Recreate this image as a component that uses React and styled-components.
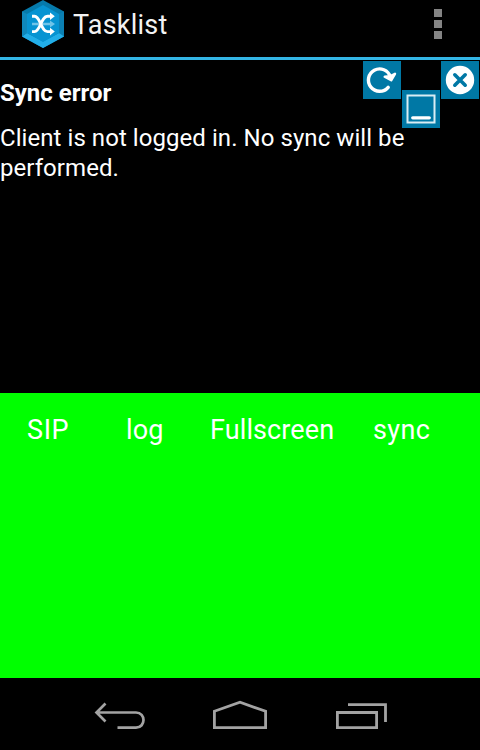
import React from "react";
import styled, { createGlobalStyle } from "styled-components";

const GlobalStyle = createGlobalStyle`
  *, *::before, *::after { box-sizing: border-box; }
  body { margin: 0; background: #000; }
`;

const Screen = styled.div`
  width: 480px;
  height: 750px;
  display: flex;
  flex-direction: column;
  overflow: hidden;
  background: #000;
  color: #fff;
  font-family: Roboto, sans-serif;
`;

const ActionBar = styled.header`
  height: 60px;
  flex: none;
  display: flex;
  align-items: flex-start;
  border-bottom: 3px solid #33b5e5;
  padding-left: 22px;
`;

const Icon = styled.svg`
  display: block;
  flex: none;
`;

const Title = styled.h1`
  flex: 1;
  margin: 0 0 0 8px;
  font-size: 27px;
  font-weight: 400;
  line-height: 50px;
  letter-spacing: 0.2px;
  color: #f3f3f3;
`;

const Overflow = styled.button`
  display: flex;
  flex-direction: column;
  gap: 3px;
  margin: 9px 38px 0 0;
  padding: 0;
  border: 0;
  background: none;
`;

const Dot = styled.span`
  width: 8px;
  height: 8px;
  background: #848484;
`;

const Content = styled.main`
  position: relative;
  height: 333px;
  flex: none;
  padding-top: 18px;
`;

const Heading = styled.h2`
  margin: 0 0 15px;
  font-size: 24px;
  font-weight: 700;
  line-height: 30px;
`;

const Message = styled.p`
  margin: 0;
  width: 440px;
  font-size: 24px;
  line-height: 30px;
  letter-spacing: 0.06px;
`;

const FloatingButton = styled.button`
  position: absolute;
  left: ${(p) => p.$left}px;
  top: ${(p) => p.$top}px;
  width: 38px;
  height: 38px;
  padding: 0;
  border: 0;
  background: #0078a5;
`;

const MenuPanel = styled.section`
  height: 285px;
  flex: none;
  display: flex;
  align-items: flex-start;
  padding: 21px 0 0 27px;
  background: #00ff00;
`;

const MenuItem = styled.button`
  width: ${(p) => p.$width}px;
  padding: 0;
  border: 0;
  background: none;
  color: #fff;
  font: 400 27px/32px Roboto, sans-serif;
  letter-spacing: ${(p) => p.$tracking}px;
  text-align: left;
  white-space: nowrap;
`;

const NavBar = styled.nav`
  height: 72px;
  flex: none;
  display: flex;
  align-items: flex-start;
  justify-content: space-between;
  padding: 20px 91px 0 93px;
`;

const NavButton = styled.button`
  padding: 0;
  border: 0;
  background: none;
`;

const Logo = () => (
  <Icon width="43" height="48" viewBox="0 0 43 48">
    <path d="M21 0 42 11.5V36.5L21 48 0 36.5V11.5Z" fill="#067aab" />
    <path d="M0 36.5 5 33 21 41.5 37 33 42 34V36.5L21 48Z" fill="#22aee8" />
    <path d="M37 14 42 11.5V36.5L37 33Z" fill="#0b80b3" />
    <path d="M0 11.5 5 14V33L0 36.5Z" fill="#0f88bc" />
    <path d="M21 5 37 14V33L21 42 5 33V14Z" fill="#0794d2" />
    <g fill="none" strokeWidth="2.5">
      <path d="M10 24H30" stroke="#70c4e8" />
      <path d="m28 20.4 5 3.6-5 3.6Z" fill="#70c4e8" stroke="none" />
      <path
        d="M10 16.3H12.5C18.5 16.3 19 31.6 25.5 31.6H29M10 31.6H12.5C18.5 31.6 19 16.3 25.5 16.3H29"
        stroke="#fff"
        strokeWidth="2.9"
      />
      <path d="m28 12.5 4.8 3.8-4.8 3.8ZM28 27.8l4.8 3.8-4.8 3.8Z" fill="#fff" stroke="none" />
    </g>
  </Icon>
);

const RefreshIcon = () => (
  <Icon width="38" height="38" viewBox="0 0 38 38" fill="none" stroke="#fff" strokeLinecap="round" strokeLinejoin="round">
    <path d="M25.2 26.3A11.2 11.2 0 1 1 27.3 15.8" strokeWidth="3.4" />
    <path d="M21.7 15.8 28.2 19.3 32 12.8 27 15.3Z" strokeWidth="2.4" fill="#fff" />
  </Icon>
);

const MinimizeIcon = () => (
  <Icon width="38" height="38" viewBox="0 0 38 38" fill="none" stroke="#fff">
    <rect x="5.5" y="5.5" width="27" height="27" strokeWidth="2" stroke="#d9edf4" />
    <path d="M10.7 27.8H27.3" strokeWidth="3.2" strokeLinecap="round" />
  </Icon>
);

const CloseIcon = () => (
  <Icon width="38" height="38" viewBox="0 0 38 38">
    <circle cx="19" cy="19" r="14.2" fill="#fff" />
    <path d="m13.8 13.8 10.4 10.4m0-10.4L13.8 24.2" stroke="#0078a5" strokeWidth="3.6" strokeLinecap="round" />
  </Icon>
);

const BackIcon = () => (
  <Icon width="53" height="34" viewBox="0 0 53 34" fill="none" stroke="#a3a3a3" strokeWidth="2.7">
    <path d="M12.5 5.5 3.5 14.5l9 9M4 14.5H43C53 14.5 53 29.6 43 29.6H24.5" />
  </Icon>
);

const HomeIcon = () => (
  <Icon width="56" height="34" viewBox="0 0 56 34" fill="none" stroke="#a3a3a3" strokeWidth="2.8">
    <path d="M1.4 13.3 27 4.3 52.6 13.3V29.6H1.4Z" />
  </Icon>
);

const RecentsIcon = () => (
  <Icon width="54" height="34" viewBox="0 0 54 34" fill="none" stroke="#a3a3a3" strokeWidth="2.8">
    <path d="M2.4 14.5H41.6V29.6H2.4ZM13 6.7H50.5V24" />
  </Icon>
);

const floatingActions = [
  { label: "Refresh", left: 363, top: 1, Glyph: RefreshIcon },
  { label: "Minimize", left: 402, top: 30, Glyph: MinimizeIcon },
  { label: "Close", left: 441, top: 1, Glyph: CloseIcon },
];

const menuItems = [
  { label: "SIP", width: 99, tracking: 0.6 },
  { label: "log", width: 84, tracking: 0.1 },
  { label: "Fullscreen", width: 163, tracking: 0.1 },
  { label: "sync", width: 80, tracking: 0.4 },
];

const navItems = [
  { label: "Back", Glyph: BackIcon },
  { label: "Home", Glyph: HomeIcon },
  { label: "Recent apps", Glyph: RecentsIcon },
];

export default function App() {
  return (
    <Screen>
      <GlobalStyle />
      <ActionBar>
        <Logo />
        <Title>Tasklist</Title>
        <Overflow aria-label="More options">
          <Dot />
          <Dot />
          <Dot />
        </Overflow>
      </ActionBar>
      <Content>
        <Heading>Sync error</Heading>
        <Message>Client is not logged in. No sync will be performed.</Message>
        {floatingActions.map(({ label, left, top, Glyph }) => (
          <FloatingButton key={label} aria-label={label} $left={left} $top={top}>
            <Glyph />
          </FloatingButton>
        ))}
      </Content>
      <MenuPanel>
        {menuItems.map(({ label, width, tracking }) => (
          <MenuItem key={label} $width={width} $tracking={tracking}>{label}</MenuItem>
        ))}
      </MenuPanel>
      <NavBar>
        {navItems.map(({ label, Glyph }) => (
          <NavButton key={label} aria-label={label}>
            <Glyph />
          </NavButton>
        ))}
      </NavBar>
    </Screen>
  );
}
